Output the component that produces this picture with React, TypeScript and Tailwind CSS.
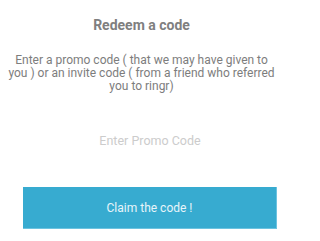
import React from "react";

export default function App() {
  return (
    <div
      className="w-[300px] h-[241px] bg-white flex flex-col overflow-hidden"
      style={{ fontFamily: "Roboto, 'Noto Sans', sans-serif" }}
    >
      <div className="w-[283px] flex flex-col items-center">
        <h1 className="mt-[17px] text-[14px] leading-[16px] font-bold text-[#7f7f7f]">
          Redeem a code
        </h1>
        <p className="mt-[21px] text-[12px] leading-[13px] text-[#7d7d7d] text-center">
          Enter a promo code ( that we may have given to
          <br />
          you ) or an invite code ( from a friend who referred
          <br />
          you to ringr)
        </p>
      </div>
      <div className="mt-[40px] flex justify-center">
        <input
          className="w-[254px] text-center text-[12.5px] leading-[16px] h-[16px] outline-none bg-transparent placeholder:text-[#cccccc] text-[#777777]"
          placeholder="Enter Promo Code"
        />
      </div>
      <div className="mt-[38px] px-[23px]">
        <button className="w-full h-[42px] bg-[#37abd0] border-r border-b border-[#6cc3e0] text-[12px] text-[#e8f5fa] flex items-center justify-center">
          Claim the code !
        </button>
      </div>
    </div>
  );
}
